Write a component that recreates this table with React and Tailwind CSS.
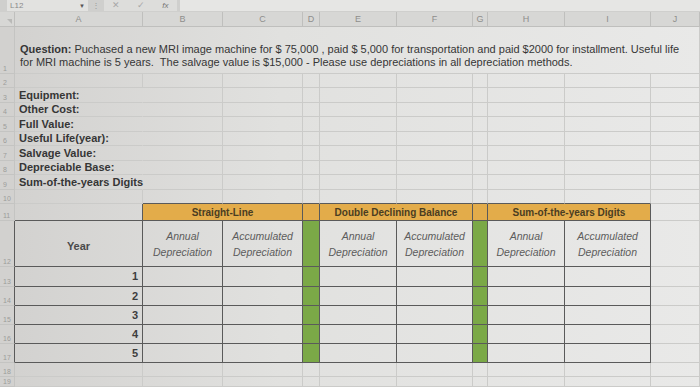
import clsx from 'clsx';

const GRID = 'grid grid-cols-[15px_128px_80px_80px_17px_77px_76px_15px_77px_86px_1fr]';
const LETTERS = ['A', 'B', 'C', 'D', 'E', 'F', 'G', 'H', 'I', 'J'];

function RowNum({ n, dark }) {
  return (
    <div
      className={clsx(
        'flex items-end pl-[3px] pb-[1px] text-[7px] leading-none text-[#9c9c9a] bg-[#d2d1cf] border-r border-b border-b-[#c4c4c2]',
        dark ? 'border-r-[#5a5a5a]' : 'border-r-[#c4c4c2]'
      )}
    >
      {n}
    </div>
  );
}

function Cell({ className, children }) {
  return <div className={clsx('border-r border-b min-w-0', className)}>{children}</div>;
}

// light sheet grid line vs dark table rule
const light = 'border-r-[#cbcbc9] border-b-[#cbcbc9]';
const dark = 'border-r-[#5a5a5a] border-b-[#5a5a5a]';

function HeadText({ top, bottom }) {
  return (
    <div className="flex h-full flex-col items-center justify-center text-[10.5px] leading-[16px] italic text-[#5c5c5c]">
      <span>{top}</span>
      <span>{bottom}</span>
    </div>
  );
}

const labels = [
  null,
  'Equipment:',
  'Other Cost:',
  'Full Value:',
  'Useful Life(year):',
  'Salvage Value:',
  'Depreciable Base:',
  'Sum-of-the-years Digits',
];
const smallHeights = ['h-[14px]', 'h-[15px]', 'h-[14px]', 'h-[15px]', 'h-[14px]', 'h-[15px]', 'h-[14px]', 'h-[15px]', 'h-[14px]'];
const bodyHeights = ['h-[20px]', 'h-[19px]', 'h-[19px]', 'h-[19px]', 'h-[19px]'];

export default function App() {
  return (
    <div className="h-[387px] w-[700px] overflow-hidden bg-[#e4e4e2] font-['Liberation_Sans',Arial,sans-serif] text-[#363636]">
      {/* formula bar */}
      <div className="flex h-[12px] items-stretch gap-[3px] bg-[#cfcfcd] pb-[1px]">
        <div className="ml-[7px] flex w-[81px] items-center justify-between bg-[#e2e2e0] px-[3px] text-[8px] leading-none text-[#8a8a8a]">
          <span>L12</span>
          <span className="text-[6px] text-[#555]">▼</span>
        </div>
        <div className="flex w-[10px] items-center justify-center text-[8px] text-[#999]">⋮</div>
        <div className="flex w-[73px] items-center justify-around bg-[#dddddb] text-[9px] leading-none text-[#a8a8a8]">
          <span>✕</span>
          <span>✓</span>
          <span className="italic text-[#777] text-[8px]">fx</span>
        </div>
        <div className="flex-1 bg-[#e6e6e4]" />
      </div>

      <div className="bg-linear-to-r from-[#d2d1cf] via-[#e1e1df] via-40% to-[#e9e9e8]">
        {/* column header */}
        <div className={clsx(GRID, 'h-[15px] bg-[#d7d7d5]')}>
          <div className="relative border-r border-b border-[#bfbfbd]">
            <span className="absolute bottom-[2px] right-[2px] h-0 w-0 border-l-[5px] border-t-[5px] border-l-transparent border-t-[#b9b9b7]" />
          </div>
          {LETTERS.map((c) => (
            <div
              key={c}
              className="flex items-center justify-center border-r border-b border-[#bfbfbd] text-[9px] leading-none text-[#8e8e8c]"
            >
              {c}
            </div>
          ))}
        </div>

        {/* row 1: question */}
        <div className={clsx(GRID, 'h-[47px]')}>
          <RowNum n="1" />
          <Cell className={clsx(light, 'col-span-10 flex items-end pb-[4px] pl-[5px]')}>
            <p className="whitespace-nowrap text-[11px] leading-[13px]">
              <b>Question:</b> Puchased a new MRI image machine for $ 75,000 , paid $ 5,000 for transportation and paid $2000 for installment. Useful life
              <br />
              for MRI machine is 5 years.&nbsp; The salvage value is $15,000 - Please use depreciations in all depreciation methods.
            </p>
          </Cell>
        </div>

        {/* rows 2-10 */}
        {smallHeights.map((h, i) => {
          const n = i + 2;
          const label = labels[i];
          const isTen = n === 10;
          return (
            <div key={n} className={clsx(GRID, h)}>
              <RowNum n={String(n)} />
              {LETTERS.map((c, ci) => {
                const tableTop = isTen && ci >= 1 && ci <= 8;
                return (
                  <Cell
                    key={c}
                    className={clsx(
                      'border-r-[#cbcbc9]',
                      tableTop ? 'border-b-[#5a5a5a]' : 'border-b-[#cbcbc9]',
                      ci === 0 && label && 'flex items-center pl-[4px] text-[11px] font-bold leading-none whitespace-nowrap',
                      ci === 0 && label && 'border-r-transparent'
                    )}
                  >
                    {ci === 0 ? label : null}
                  </Cell>
                );
              })}
            </div>
          );
        })}

        {/* row 11: method headers */}
        <div className={clsx(GRID, 'h-[17px]')}>
          <RowNum n="11" />
          <Cell className={dark} />
          <Cell className={clsx(dark, 'col-span-2 flex items-center justify-center bg-[#e3ac4a] text-[10px] font-bold text-[#4a3d22]')}>
            Straight-Line
          </Cell>
          <Cell className={clsx(dark, 'bg-[#e3ac4a]')} />
          <Cell className={clsx(dark, 'col-span-2 flex items-center justify-center bg-[#e3ac4a] text-[10px] font-bold text-[#4a3d22]')}>
            Double Declining Balance
          </Cell>
          <Cell className={clsx(dark, 'bg-[#e3ac4a]')} />
          <Cell className={clsx(dark, 'col-span-2 flex items-center justify-center bg-[#e3ac4a] text-[10px] font-bold text-[#4a3d22]')}>
            Sum-of-the-years Digits
          </Cell>
          <Cell className={light} />
        </div>

        {/* row 12: sub headers */}
        <div className={clsx(GRID, 'h-[46px]')}>
          <RowNum n="12" dark />
          <Cell className={clsx(dark, 'flex items-center justify-center pt-[6px] text-[11px] font-bold text-[#4a4a4a]')}>Year</Cell>
          <Cell className={dark}><HeadText top="Annual" bottom="Depreciation" /></Cell>
          <Cell className={dark}><HeadText top="Accumulated" bottom="Depreciation" /></Cell>
          <Cell className={clsx(dark, 'bg-[#7ba947]')} />
          <Cell className={dark}><HeadText top="Annual" bottom="Depreciation" /></Cell>
          <Cell className={dark}><HeadText top="Accumulated" bottom="Depreciation" /></Cell>
          <Cell className={clsx(dark, 'bg-[#7ba947]')} />
          <Cell className={dark}><HeadText top="Annual" bottom="Depreciation" /></Cell>
          <Cell className={dark}><HeadText top="Accumulated" bottom="Depreciation" /></Cell>
          <Cell className={light} />
        </div>

        {/* rows 13-17: years */}
        {bodyHeights.map((h, i) => (
          <div key={i} className={clsx(GRID, h)}>
            <RowNum n={String(13 + i)} dark />
            <Cell className={clsx(dark, 'flex items-center justify-end pr-[4px] text-[11px] font-bold text-[#3e3e3e]')}>{i + 1}</Cell>
            <Cell className={dark} />
            <Cell className={dark} />
            <Cell className={clsx(dark, 'bg-[#7ba947]')} />
            <Cell className={dark} />
            <Cell className={dark} />
            <Cell className={clsx(dark, 'bg-[#7ba947]')} />
            <Cell className={dark} />
            <Cell className={dark} />
            <Cell className={light} />
          </div>
        ))}

        {/* rows 18-19 */}
        {['h-[14px]', 'h-[10px]'].map((h, i) => (
          <div key={i} className={clsx(GRID, h)}>
            <RowNum n={String(18 + i)} />
            {LETTERS.map((c) => (
              <Cell key={c} className={light} />
            ))}
          </div>
        ))}
      </div>
    </div>
  );
}
